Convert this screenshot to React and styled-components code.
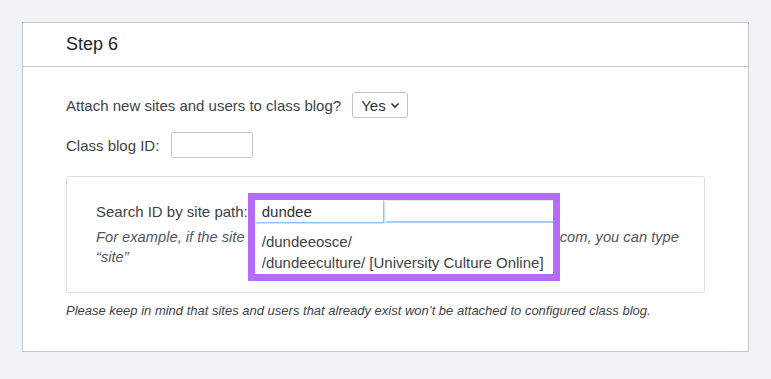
import React from "react";
import styled, { createGlobalStyle } from "styled-components";

const GlobalStyle = createGlobalStyle`
  html, body {
    margin: 0;
    padding: 0;
    background: #f0f3f6;
  }
  body {
    font-family: "Liberation Sans", Arial, Helvetica, sans-serif;
    color: #3c434a;
  }
`;

const Page = styled.div`
  padding: 22px 22px 27px 22px;
  width: 727px;
`;

const Card = styled.section`
  background: #fff;
  border: 1px solid #c3c8cf;
`;

const CardHeader = styled.header`
  height: 43px;
  display: flex;
  align-items: center;
  padding-left: 43px;
  border-bottom: 1px solid #c3c8cf;
  h2 {
    margin: 0;
    font-size: 18px;
    font-weight: 500;
    color: #1d2327;
  }
`;

const CardBody = styled.div`
  padding: 25px 43px 33px 43px;
`;

const FieldRow = styled.div`
  display: flex;
  align-items: center;
  gap: ${({ $gap }) => $gap || 11}px;
  font-size: 15px;
  margin-top: ${({ $top }) => $top || 0}px;
`;

const Select = styled.div`
  height: 24px;
  padding: 0 7px 0 8px;
  display: flex;
  align-items: center;
  gap: 4px;
  border: 1px solid #c3c4c7;
  border-radius: 3px;
  font-size: 15px;
  color: #2c3338;
  svg {
    width: 10px;
    height: 10px;
  }
`;

const TextInput = styled.input`
  box-sizing: border-box;
  width: 82px;
  height: 26px;
  border: 1px solid #c3c4c7;
  border-radius: 3px;
  font: inherit;
  padding: 0 8px;
  outline: none;
`;

const SearchBox = styled.div`
  margin-top: 18px;
  border: 1px solid #dcdee1;
  border-radius: 3px;
  padding: 22px 18px 25px 29px;
`;

const SearchRow = styled.div`
  display: flex;
  align-items: center;
  font-size: 15px;
  height: 24px;
`;

const SearchLabel = styled.label`
  margin-right: 7px;
`;

const AutoWrap = styled.div`
  position: relative;
  width: 129px;
  height: 23px;
  margin-top: 1px;
`;

const PathInput = styled.input`
  box-sizing: border-box;
  width: 129px;
  height: 23px;
  border: 1px solid #fff;
  border-right-color: #92c1ee;
  border-bottom-color: #92c1ee;
  box-shadow: 1px 1px 2px rgba(120, 170, 225, 0.5);
  font: inherit;
  font-size: 15px;
  color: #2c3338;
  padding: 0 6px;
  outline: none;
  background: #fff;
`;

const GhostField = styled.div`
  position: absolute;
  top: 0;
  left: 131px;
  width: 167px;
  height: 23px;
  box-sizing: border-box;
  border-top: 1px solid #e3eaf2;
  border-bottom: 2px solid #a8cdf1;
  background: #fff;
`;

const Suggestions = styled.ul`
  position: absolute;
  top: 24px;
  left: 0;
  width: 298px;
  height: 50px;
  margin: 0;
  padding: 7px 0 0 7px;
  box-sizing: border-box;
  list-style: none;
  background: #fff;
  li {
    font-size: 15px;
    line-height: 21px;
    color: #3c434a;
    white-space: nowrap;
  }
`;

const Highlight = styled.div`
  position: absolute;
  top: -7px;
  left: -7px;
  width: 312px;
  height: 88px;
  box-sizing: border-box;
  border: 7px solid #b56bff;
  pointer-events: none;
`;

const Hint = styled.p`
  margin: 4px 0 0 0;
  font-size: 14.7px;
  line-height: 20px;
  font-style: italic;
  color: #50575e;
`;

const Note = styled.p`
  margin: 10px 0 0 0;
  font-size: 13px;
  font-style: italic;
  color: #3c434a;
`;

const Chevron = () => (
  <svg viewBox="0 0 10 10" fill="none" stroke="#2c3338" strokeWidth="1.6">
    <path d="M1.5 3.5 L5 7 L8.5 3.5" />
  </svg>
);

export default function App() {
  return (
    <>
      <GlobalStyle />
      <Page>
        <Card>
          <CardHeader>
            <h2>Step 6</h2>
          </CardHeader>
          <CardBody>
            <FieldRow>
              <span>Attach new sites and users to class blog?</span>
              <Select>
                Yes
                <Chevron />
              </Select>
            </FieldRow>
            <FieldRow $top={14} $gap={12}>
              <span>Class blog ID:</span>
              <TextInput type="text" />
            </FieldRow>
            <SearchBox>
              <SearchRow>
                <SearchLabel>Search ID by site path:</SearchLabel>
                <AutoWrap>
                  <PathInput type="text" defaultValue="dundee" />
                  <GhostField />
                  <Suggestions>
                    <li>/dundeeosce/</li>
                    <li>/dundeeculture/ [University Culture Online]</li>
                  </Suggestions>
                  <Highlight />
                </AutoWrap>
              </SearchRow>
              <Hint>
                For example, if the site you are searching for is located at site.example.com, you
                can type “site”
              </Hint>
            </SearchBox>
            <Note>
              Please keep in mind that sites and users that already exist won’t be attached to
              configured class blog.
            </Note>
          </CardBody>
        </Card>
      </Page>
    </>
  );
}
